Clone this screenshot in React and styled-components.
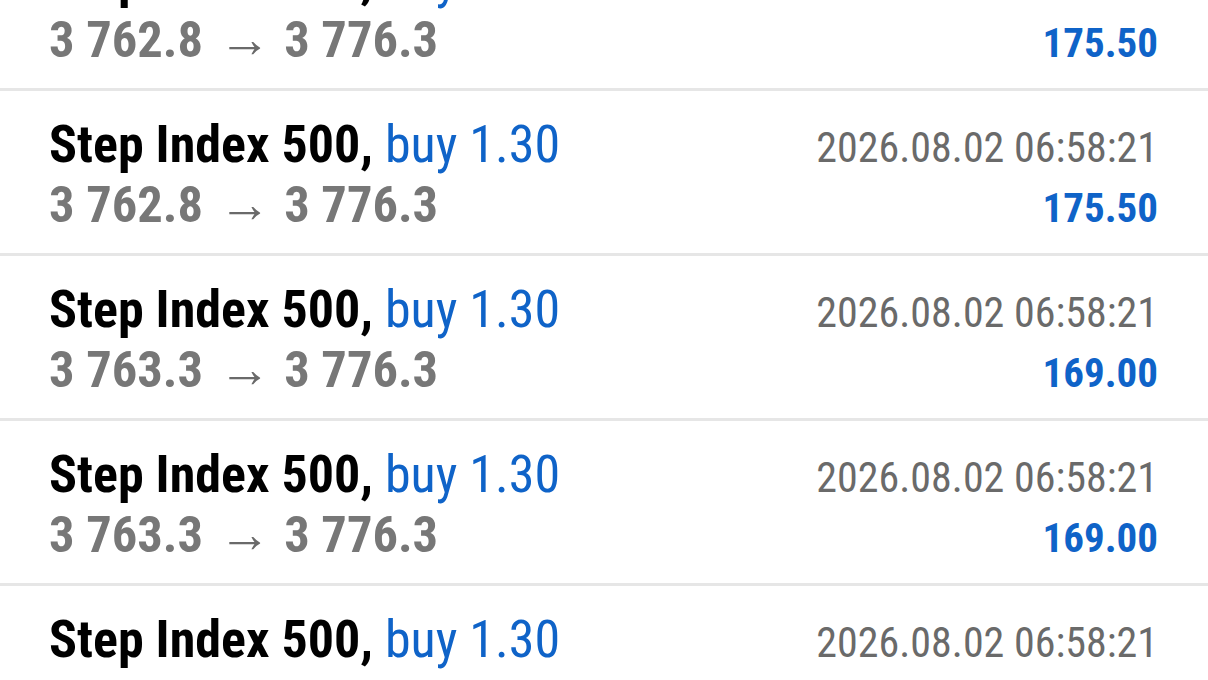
import React from 'react'
import styled, { createGlobalStyle } from 'styled-components'

const GlobalStyle = createGlobalStyle`
  html, body {
    margin: 0;
    padding: 0;
    background: #fff;
    overflow: hidden;
  }
  body {
    font-family: 'Roboto Condensed', Roboto, 'Liberation Sans', sans-serif;
  }
`

const deals = [
  { symbol: 'Step Index 500', side: 'buy', volume: '1.30', open: '3 762.8', close: '3 776.3', time: '2026.08.02 06:58:21', profit: '175.50' },
  { symbol: 'Step Index 500', side: 'buy', volume: '1.30', open: '3 762.8', close: '3 776.3', time: '2026.08.02 06:58:21', profit: '175.50' },
  { symbol: 'Step Index 500', side: 'buy', volume: '1.30', open: '3 763.3', close: '3 776.3', time: '2026.08.02 06:58:21', profit: '169.00' },
  { symbol: 'Step Index 500', side: 'buy', volume: '1.30', open: '3 763.3', close: '3 776.3', time: '2026.08.02 06:58:21', profit: '169.00' },
  { symbol: 'Step Index 500', side: 'buy', volume: '1.30', open: '3 763.3', close: '3 776.3', time: '2026.08.02 06:58:21', profit: '169.00' },
]

const App = () => (
  <>
    <GlobalStyle />
    <List>
      {deals.map((d, i) => (
        <Row key={i}>
          <Title>
            {d.symbol}, <Side>{d.side} {d.volume}</Side>
          </Title>
          <Time>{d.time}</Time>
          <Prices>
            {d.open} <Arrow>→</Arrow> {d.close}
          </Prices>
          <Profit>{d.profit}</Profit>
        </Row>
      ))}
    </List>
  </>
)

export default App

const List = styled.div`
  margin-top: -74px;
  display: flex;
  flex-direction: column;
`

const Row = styled.div`
  display: grid;
  grid-template-columns: 1fr auto;
  grid-auto-rows: 60px;
  align-items: baseline;
  box-sizing: border-box;
  height: 165px;
  flex-shrink: 0;
  padding: 24px 50px 0 49px;
  border-bottom: 3px solid #e6e6e6;
`

const Title = styled.div`
  font-size: 52px;
  line-height: 60px;
  font-weight: 700;
  color: #000;
  white-space: nowrap;
`

const Side = styled.span`
  font-weight: 400;
  color: #0f63c8;
`

const Prices = styled.div`
  font-size: 50.5px;
  line-height: 60px;
  font-weight: 700;
  color: #777;
  white-space: nowrap;
`

const Arrow = styled.span`
  margin: 0 2px 0 4px;
  font-weight: 400;
  font-size: 52px;
  color: #6a6a6a;
`

const Time = styled.div`
  font-size: 42px;
  line-height: 60px;
  color: #6a6a6a;
  text-align: right;
  white-space: nowrap;
`

const Profit = styled.div`
  font-size: 41px;
  line-height: 60px;
  font-weight: 700;
  color: #0f63c8;
  text-align: right;
  white-space: nowrap;
`
